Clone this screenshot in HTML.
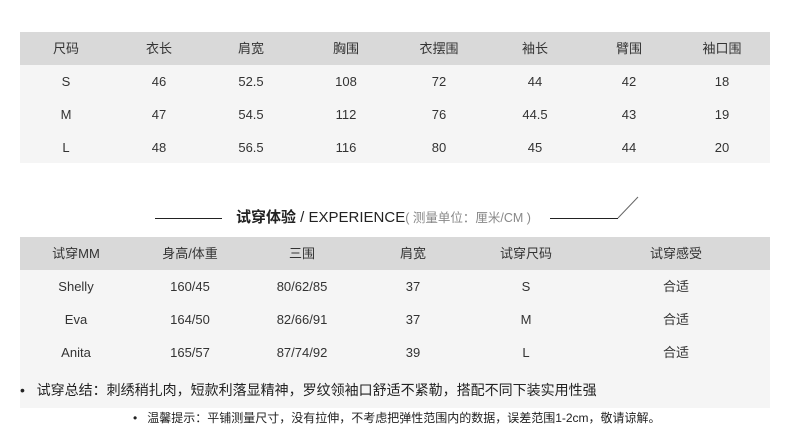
<!DOCTYPE html>
<html><head><meta charset="utf-8"><style>
body{margin:0;width:790px;height:443px;background:#fff;font-family:"Liberation Sans","Noto Sans CJK SC",sans-serif;color:#333;position:relative;overflow:hidden}
.t{position:absolute;left:20px;width:750px;background:#f5f5f5}
.r{position:absolute;left:0;width:750px;height:33px;font-size:13px}
.r span{position:absolute;top:0;line-height:33px;transform:translateX(-50%);white-space:nowrap}
.h{background:#d9d9d9}
.ab{position:absolute}
</style></head><body>
<div class="t" style="top:32px;height:131px">
 <div class="r h" style="top:0"><span style="left:46px">尺码</span><span style="left:139px">衣长</span><span style="left:231px">肩宽</span><span style="left:326px">胸围</span><span style="left:419px">衣摆围</span><span style="left:515px">袖长</span><span style="left:609px">臂围</span><span style="left:702px">袖口围</span></div>
 <div class="r" style="top:33px"><span style="left:46px">S</span><span style="left:139px">46</span><span style="left:231px">52.5</span><span style="left:326px">108</span><span style="left:419px">72</span><span style="left:515px">44</span><span style="left:609px">42</span><span style="left:702px">18</span></div>
 <div class="r" style="top:66px"><span style="left:46px">M</span><span style="left:139px">47</span><span style="left:231px">54.5</span><span style="left:326px">112</span><span style="left:419px">76</span><span style="left:515px">44.5</span><span style="left:609px">43</span><span style="left:702px">19</span></div>
 <div class="r" style="top:99px"><span style="left:46px">L</span><span style="left:139px">48</span><span style="left:231px">56.5</span><span style="left:326px">116</span><span style="left:419px">80</span><span style="left:515px">45</span><span style="left:609px">44</span><span style="left:702px">20</span></div>
</div>
<div class="ab" style="left:155px;top:218px;width:67px;height:1px;background:#222"></div>
<div class="ab" style="left:236px;top:208px;font-size:15px;line-height:20px;color:#222;white-space:nowrap"><b>试穿体验</b> / EXPERIENCE<span style="font-size:12.5px;color:#888">( 测量单位：厘米/CM )</span></div>
<div class="ab" style="left:550px;top:218px;width:68px;height:1px;background:#222"></div>
<svg class="ab" style="left:616px;top:195px" width="24" height="25"><line x1="2" y1="23" x2="22" y2="2" stroke="#666" stroke-width="1"/></svg>
<div class="t" style="top:237px;height:171px;left:20px">
 <div class="r h" style="top:0"><span style="left:56px">试穿MM</span><span style="left:170px">身高/体重</span><span style="left:282px">三围</span><span style="left:393px">肩宽</span><span style="left:506px">试穿尺码</span><span style="left:656px">试穿感受</span></div>
 <div class="r" style="top:33px"><span style="left:56px">Shelly</span><span style="left:170px">160/45</span><span style="left:282px">80/62/85</span><span style="left:393px">37</span><span style="left:506px">S</span><span style="left:656px">合适</span></div>
 <div class="r" style="top:66px"><span style="left:56px">Eva</span><span style="left:170px">164/50</span><span style="left:282px">82/66/91</span><span style="left:393px">37</span><span style="left:506px">M</span><span style="left:656px">合适</span></div>
 <div class="r" style="top:99px"><span style="left:56px">Anita</span><span style="left:170px">165/57</span><span style="left:282px">87/74/92</span><span style="left:393px">39</span><span style="left:506px">L</span><span style="left:656px">合适</span></div>
</div>
<div class="ab" style="left:20px;top:380px;font-size:14px;color:#222;white-space:nowrap">•&nbsp;&nbsp; 试穿总结：刺绣稍扎肉，短款利落显精神，罗纹领袖口舒适不紧勒，搭配不同下装实用性强</div>
<div class="ab" style="left:133px;top:409px;font-size:12px;color:#222;white-space:nowrap">•&nbsp;&nbsp; 温馨提示：平铺测量尺寸，没有拉伸，不考虑把弹性范围内的数据，误差范围1-2cm，敬请谅解。</div>
</body></html>
